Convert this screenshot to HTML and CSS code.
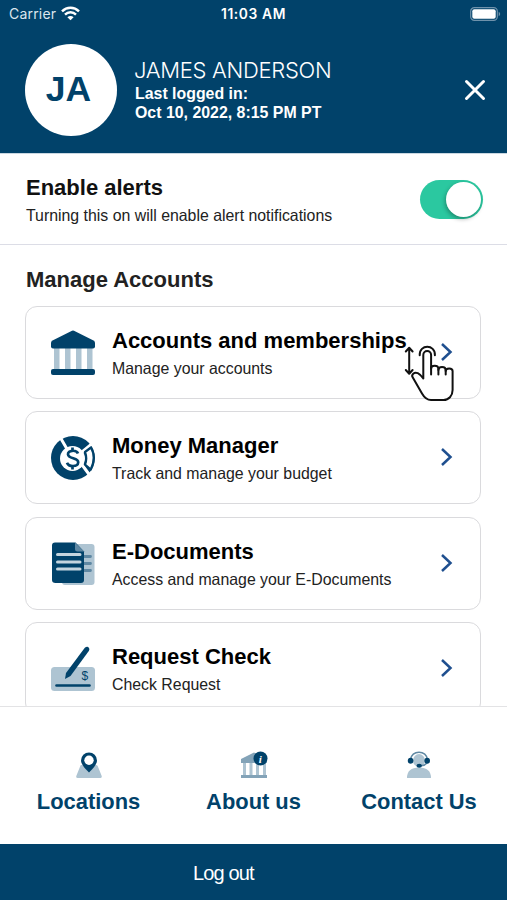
FILE: index.html
```html
<!DOCTYPE html>
<html lang="en">
<head>
    <meta charset="UTF-8">
    <meta name="viewport" content="width=device-width, initial-scale=1.0">
    <title>Profile menu</title>
    <link rel="stylesheet" href="styles.css">
</head>
<body>
    <header class="header">
        <div class="status-bar">
            <div class="carrier">
                <span>Carrier</span>
                <svg width="19" height="15" viewBox="0 0 19 15" fill="none" stroke="#fff" stroke-width="2.5">
                    <path d="M1 5.3C5.8.7 13.2.7 18 5.3"/>
                    <path d="M4 8.6c3.1-3 7.9-3 11 0"/>
                    <path d="M6.4 11.2c1.7-1.6 4.5-1.6 6.2 0L9.500 14.300z" fill="#fff" stroke="none"/>
                </svg>
            </div>
            <span class="time">11:03 AM</span>
            <svg class="battery" width="31" height="14" viewBox="0 0 31 14">
                <rect x=".7" y=".7" width="26.600" height="12.600" rx="3.600" fill="none" stroke="#6f92ab" stroke-width="1.200"/>
                <rect x="2.300" y="2.300" width="23.400" height="9.400" rx="2" fill="#fff"/>
                <path d="M28.700 4.800c2 .8 2 3.600 0 4.400z" fill="#6f92ab"/>
            </svg>
        </div>
        <div class="profile">
            <div class="avatar">JA</div>
            <div class="profile-info">
                <div class="name">JAMES ANDERSON</div>
                <div class="last-login">Last logged in:<br>Oct 10, 2022, 8:15 PM PT</div>
            </div>
            <svg class="close" width="22" height="22" viewBox="0 0 22 22" stroke="#fff" stroke-width="3" stroke-linecap="round">
                <path d="M2.500 2.500l17 17M19.500 2.500l-17 17"/>
            </svg>
        </div>
    </header>

    <section class="alerts">
        <div>
            <h2>Enable alerts</h2>
            <p>Turning this on will enable alert notifications</p>
        </div>
        <div class="toggle"><div class="knob"></div></div>
    </section>

    <main class="accounts">
        <h2>Manage Accounts</h2>
        <div class="card">
            <svg class="card-icon" width="46" height="46" viewBox="0 0 46 46">
                <path d="M4 17h5.500v23H4zM15 17h5.500v23H15zM26 17h5.500v23H26zM37 17h5.500v23H37z" fill="#aec4d2"/>
                <path d="M22 .7q1-.5 2 0L43.500 10.500q1.500.8 1.500 2.500v3.500q0 2-2 2H3q-2 0-2-2V13Q1 11.300 2.500 10.500z" fill="#01426a"/>
                <rect x="1" y="39" width="44" height="6" rx="2" fill="#01426a"/>
            </svg>
            <div class="card-text">
                <h3>Accounts and memberships</h3>
                <p>Manage your accounts</p>
            </div>
            <svg class="chevron" width="13" height="20" viewBox="0 0 13 20"><path d="M2 2l8.500 8L2 18"/></svg>
            <svg class="gesture" width="58" height="64" viewBox="0 0 58 64">
                <path d="M23.300 38.500V15a3.900 3.900 0 0 1 7.800 0v14c0-4.300 7.300-4.300 7.300 0v1c0-4 7.300-4 7.300 0v1c0-3.400 6.900-3.400 6.900 0v19c0 6-4 10-9 10H31c-4 0-7-3-9-6.500L12.800 37.500c-2-3 1.500-5.800 5-4.300 2.500 1.200 4 3 5.500 5.300z" fill="#fff"/>
                <path d="M31.100 27v7.500M38.400 29v5.500M45.700 30v4.500"/>
                <path d="M19.700 15.200c-.5-11.200 15.700-11.200 15.200 0"/>
                <path d="M9.200 8v25.500M5.800 11.500l3.400-3.700 3.400 3.700M5.800 30l3.400 3.700 3.400-3.700"/>
            </svg>
        </div>
        <div class="card">
            <svg class="card-icon" width="46" height="46" viewBox="0 0 46 46">
                <circle cx="23" cy="23" r="22" fill="#01426a"/>
                <circle cx="22.500" cy="23.500" r="12.500" fill="#fff"/>
                <path d="M10 2l7 12M43 8L32 17M30 27l11 15" stroke="#fff" stroke-width="3"/>
                <path d="M35 17l6-4.500q5.500 10-.2 22L35 29.500q2.500-6 0-12.500z" fill="#fff" stroke="#01426a" stroke-width="2.200" stroke-linejoin="round"/>
                <path d="M28 18.500c-1.500-4-10.500-3.500-10 .8.500 5 10.500 3 10.200 8.200-.4 4.600-9.500 4.700-11.200.2M22.500 12.500v3.200M22.500 31v3.500" fill="none" stroke="#01426a" stroke-width="2.700"/>
            </svg>
            <div class="card-text">
                <h3>Money Manager</h3>
                <p>Track and manage your budget</p>
            </div>
            <svg class="chevron" width="13" height="20" viewBox="0 0 13 20"><path d="M2 2l8.500 8L2 18"/></svg>
        </div>
        <div class="card">
            <svg class="card-icon" width="46" height="46" viewBox="0 0 46 46">
                <rect x="12" y="3" width="32.500" height="41" rx="3" fill="#aec4d2"/>
                <path d="M32 15.500h8.500M32 22.500h8.500M32 29.500h8.500" stroke="#5f88a3" stroke-width="2.800" stroke-linecap="round"/>
                <path d="M5 1.500h20.500l8.500 9V39q0 3-3 3H5.500q-3.500 0-3.500-3V4.500q0-3 3-3z" fill="#01426a"/>
                <path d="M25 1.500l9 9h-6.500q-2.500 0-2.500-2.500z" fill="#5f88a3"/>
                <path d="M7.500 13.500h22.500M7.500 21h22.500M7.500 28h22.500" stroke="#c5d5df" stroke-width="3" stroke-linecap="round"/>
            </svg>
            <div class="card-text">
                <h3>E-Documents</h3>
                <p>Access and manage your E-Documents</p>
            </div>
            <svg class="chevron" width="13" height="20" viewBox="0 0 13 20"><path d="M2 2l8.500 8L2 18"/></svg>
        </div>
        <div class="card">
            <svg class="card-icon" width="46" height="46" viewBox="0 0 46 46">
                <rect x="1" y="21" width="44" height="24" rx="3.500" fill="#aec4d2"/>
                <path d="M6.500 39.500h33" stroke="#01426a" stroke-width="2.600" stroke-linecap="round"/>
                <path d="M34.800 1.800q2.700-2 4.200.2.800 1.500-.2 3L20.500 30 15 33l1-6z" fill="#01426a"/>
                <text x="31.500" y="34" font-size="12" fill="#01426a">$</text>
            </svg>
            <div class="card-text">
                <h3>Request Check</h3>
                <p>Check Request</p>
            </div>
            <svg class="chevron" width="13" height="20" viewBox="0 0 13 20"><path d="M2 2l8.500 8L2 18"/></svg>
        </div>
    </main>

    <nav class="links">
        <div class="link">
            <svg width="28" height="28" viewBox="0 0 28 28">
                <path d="M6 14h15q1.200 0 1.800 1.200l4 10Q27 27 25.500 27h-23Q.8 27 1.200 25.200l4-10Q5.500 14 6 14z" fill="#aec4d2"/>
                <path d="M14 21.500Q6 14 6 9.500a8 8 0 0 1 16 0Q22 14 14 21.500z" fill="#01426a"/>
                <circle cx="14" cy="9.300" r="4.700" fill="#fff"/>
            </svg>
            <span>Locations</span>
        </div>
        <div class="link">
            <svg width="28" height="28" viewBox="0 0 28 28">
                <path d="M3 11h3v14H3zM9.500 11h3v14h-3zM16 11h3v14h-3zM23 11h3v14h-3z" fill="#aec4d2"/>
                <path d="M14 1.500L27 8v4H1V8z" fill="#83a3b8"/>
                <rect x="1" y="24" width="26" height="3" fill="#83a3b8"/>
                <circle cx="20.500" cy="7.500" r="7" fill="#01426a"/>
                <text x="18.800" y="11.500" class="info">i</text>
            </svg>
            <span>About us</span>
        </div>
        <div class="link">
            <svg width="28" height="28" viewBox="0 0 28 28">
                <path d="M2 27q0-10.500 12-10.500T26 27z" fill="#aec4d2"/>
                <ellipse cx="14" cy="9.500" rx="6" ry="6.500" fill="#aec4d2"/>
                <path d="M5.500 9C6-1.500 22-1.500 22.500 9M22 12q-2 2.500-6 2.800" fill="none" stroke="#5f88a3" stroke-width="1.500"/>
                <ellipse cx="5.600" cy="9.700" rx="2.800" ry="3" fill="#01426a"/>
                <ellipse cx="22.200" cy="9.700" rx="2.800" ry="3" fill="#01426a"/>
                <ellipse cx="14.200" cy="14.800" rx="2.700" ry="2" fill="#01426a"/>
            </svg>
            <span>Contact Us</span>
        </div>
    </nav>

    <footer class="logout">Log out</footer>
</body>
</html>
```

FILE: styles.css
```css
* {
    box-sizing: border-box;
}
body {
    margin: 0;
    height: 900px;
    display: flex;
    flex-direction: column;
    overflow: hidden;
    background: #fff;
    color: #111;
    font-family: "Liberation Sans", Arial, sans-serif;
}
h2, h3, p {
    margin: 0;
}
h2, h3 {
    font-size: 22px;
    line-height: 26px;
}
p {
    font-size: 15.87px;
    line-height: 20px;
    color: #222;
}
.header {
    height: 154px;
    flex: none;
    background: #01426a;
    border-bottom: 1px solid #c9d7e1;
    color: #fff;
}
.status-bar {
    height: 27px;
    display: grid;
    grid-template-columns: 212px auto 1fr;
    align-items: center;
    padding: 0 6px 0 9px;
    font-family: Inter, sans-serif;
    font-size: 14px;
}
.carrier {
    display: flex;
    align-items: center;
    gap: 5px;
    color: #dbe6ee;
    letter-spacing: 0.2px;
}
.time {
    font-size: 13.8px;
    font-weight: 600;
    letter-spacing: 0.6px;
}
.battery {
    justify-self: end;
}
.profile {
    display: flex;
    align-items: center;
    height: 125px;
    padding: 0 21px 0 25px;
}
.avatar {
    width: 92px;
    height: 92px;
    border-radius: 50%;
    background: #fff;
    color: #01426a;
    font-size: 35.500px;
    font-weight: bold;
    line-height: 91px;
    text-align: center;
    padding-right: 5px;
}
.profile-info {
    margin-left: 17px;
}
.name {
    font-family: Inter, sans-serif;
    font-size: 22px;
    font-weight: 300;
    line-height: 26px;
    letter-spacing: -0.3px;
}
.last-login {
    margin-left: 1px;
    padding-top: 1px;
    font-size: 15.9px;
    font-weight: bold;
    line-height: 19.500px;
}
.close {
    margin-left: auto;
}
.alerts {
    height: 91px;
    flex: none;
    display: flex;
    align-items: center;
    justify-content: space-between;
    padding: 1px 24px 0 26px;
    border-bottom: 1px solid #dcdde6;
}
.alerts h2 {
    margin: 1px 0 5px;
}
.toggle {
    width: 63px;
    height: 39px;
    border-radius: 20px;
    background: #2bc8a0;
    padding: 2px;
    display: flex;
    justify-content: flex-end;
}
.knob {
    width: 35px;
    height: 35px;
    border-radius: 50%;
    background: #fff;
    box-shadow: -1px 2px 4px rgba(0, 0, 0, 0.3);
}
.accounts {
    flex: 1;
    min-height: 0;
    overflow: hidden;
    padding: 22px 26px 0 25px;
}
.accounts h2 {
    margin: 0 0 13px 1px;
    color: #222;
}
.card {
    position: relative;
    display: flex;
    align-items: center;
    height: 93px;
    margin-bottom: 12.400px;
    padding: 0 27px 0 24px;
    border: 1px solid #dadadd;
    border-radius: 12px;
}
.card-icon {
    margin: 1px 16px 0 0;
}
.card h3 {
    margin: 2px 0 5px;
    color: #000;
    white-space: nowrap;
}
.chevron {
    margin: 0 0 1px auto;
    fill: none;
    stroke: #1f4f8f;
    stroke-width: 2.500;
}
/* swipe hint lying over the first card */
.gesture {
    position: absolute;
    left: 374px;
    top: 33px;
    fill: none;
    stroke: #111;
    stroke-width: 2;
    stroke-linejoin: round;
    stroke-linecap: round;
}
.links {
    height: 138px;
    flex: none;
    display: grid;
    grid-template-columns: 103px auto 116px;
    justify-content: space-between;
    padding: 44px 30px 0 37px;
    border-top: 1px solid #e3e3e5;
    color: #01426a;
    font-size: 21.900px;
    font-weight: bold;
}
.link {
    display: flex;
    flex-direction: column;
    align-items: center;
    gap: 10px;
    line-height: 26px;
    white-space: nowrap;
}
.link:nth-child(2) {
    margin-left: 6px;
}
.info {
    font: italic bold 11px "Liberation Serif", serif;
    fill: #fff;
}
.logout {
    height: 56px;
    flex: none;
    background: #01426a;
    color: #fff;
    padding-left: 193px;
    font-size: 20px;
    letter-spacing: -0.85px;
    line-height: 58px;
}
```
